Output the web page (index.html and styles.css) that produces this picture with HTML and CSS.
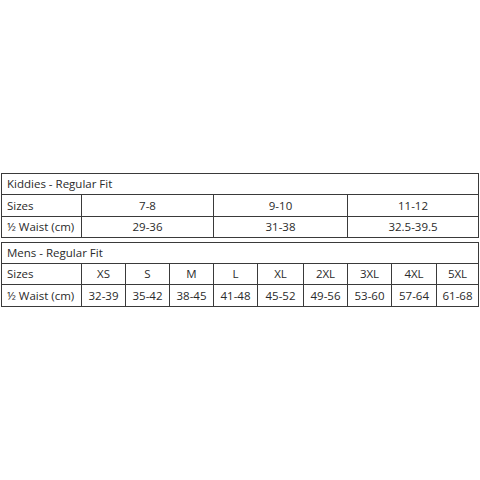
FILE: index.html
```html
<!DOCTYPE html>
<html>
<head>
<meta charset="utf-8">
<link rel="stylesheet" href="styles.css">
</head>
<body>
<div class="page">
  <table class="chart kids">
    <colgroup>
      <col class="c-label">
      <col class="c-k1">
      <col class="c-k2">
      <col class="c-k3">
    </colgroup>
    <tr class="r-title"><td colspan="4" class="title">Kiddies - Regular Fit</td></tr>
    <tr class="r-mid"><td class="label">Sizes</td><td>7-8</td><td>9-10</td><td>11-12</td></tr>
    <tr class="r-last"><td class="label">½ Waist (cm)</td><td>29-36</td><td>31-38</td><td>32.5-39.5</td></tr>
  </table>
  <table class="chart mens">
    <colgroup>
      <col class="c-label">
      <col class="c-m"><col class="c-m"><col class="c-m"><col class="c-m">
      <col class="c-m2"><col class="c-m"><col class="c-m"><col class="c-m3"><col class="c-m4">
    </colgroup>
    <tr class="r-title"><td colspan="10" class="title">Mens - Regular Fit</td></tr>
    <tr class="r-mid"><td class="label">Sizes</td><td>XS</td><td>S</td><td>M</td><td>L</td><td>XL</td><td>2XL</td><td>3XL</td><td>4XL</td><td>5XL</td></tr>
    <tr class="r-last"><td class="label">½ Waist (cm)</td><td>32-39</td><td>35-42</td><td>38-45</td><td>41-48</td><td>45-52</td><td>49-56</td><td>53-60</td><td>57-64</td><td>61-68</td></tr>
  </table>
</div>
</body>
</html>
```
FILE: styles.css
```css
html, body {
  margin: 0;
  padding: 0;
  background: #ffffff;
}
.page {
  padding: 173px 0 0 1px;
  display: flex;
  flex-direction: column;
  gap: 4px;
}
.chart {
  border-collapse: collapse;
  table-layout: fixed;
  width: 477px;
  font-family: "Open Sans", "Liberation Sans", sans-serif;
  font-size: 11.5px;
  color: #2a2a2a;
}
.chart td {
  border: 1px solid #3a3a3a;
  padding: 0;
  text-align: center;
  white-space: nowrap;
  overflow: hidden;
  line-height: 1;
}
.chart td.title,
.chart td.label {
  text-align: left;
  padding-left: 5px;
}
.kids .r-title td { height: 20px; }
.kids .r-mid td { height: 21px; }
.kids .r-last td { height: 20px; }
.mens .r-title td { height: 20px; }
.mens .r-mid td { height: 20px; }
.mens .r-last td { height: 21px; }
.c-label { width: 80px; }
.c-k1 { width: 132px; }
.c-k2 { width: 134px; }
.c-k3 { width: 131px; }
.c-m { width: 44px; }
.c-m2 { width: 46px; }
.c-m3 { width: 45px; }
.c-m4 { width: 42px; }
```
